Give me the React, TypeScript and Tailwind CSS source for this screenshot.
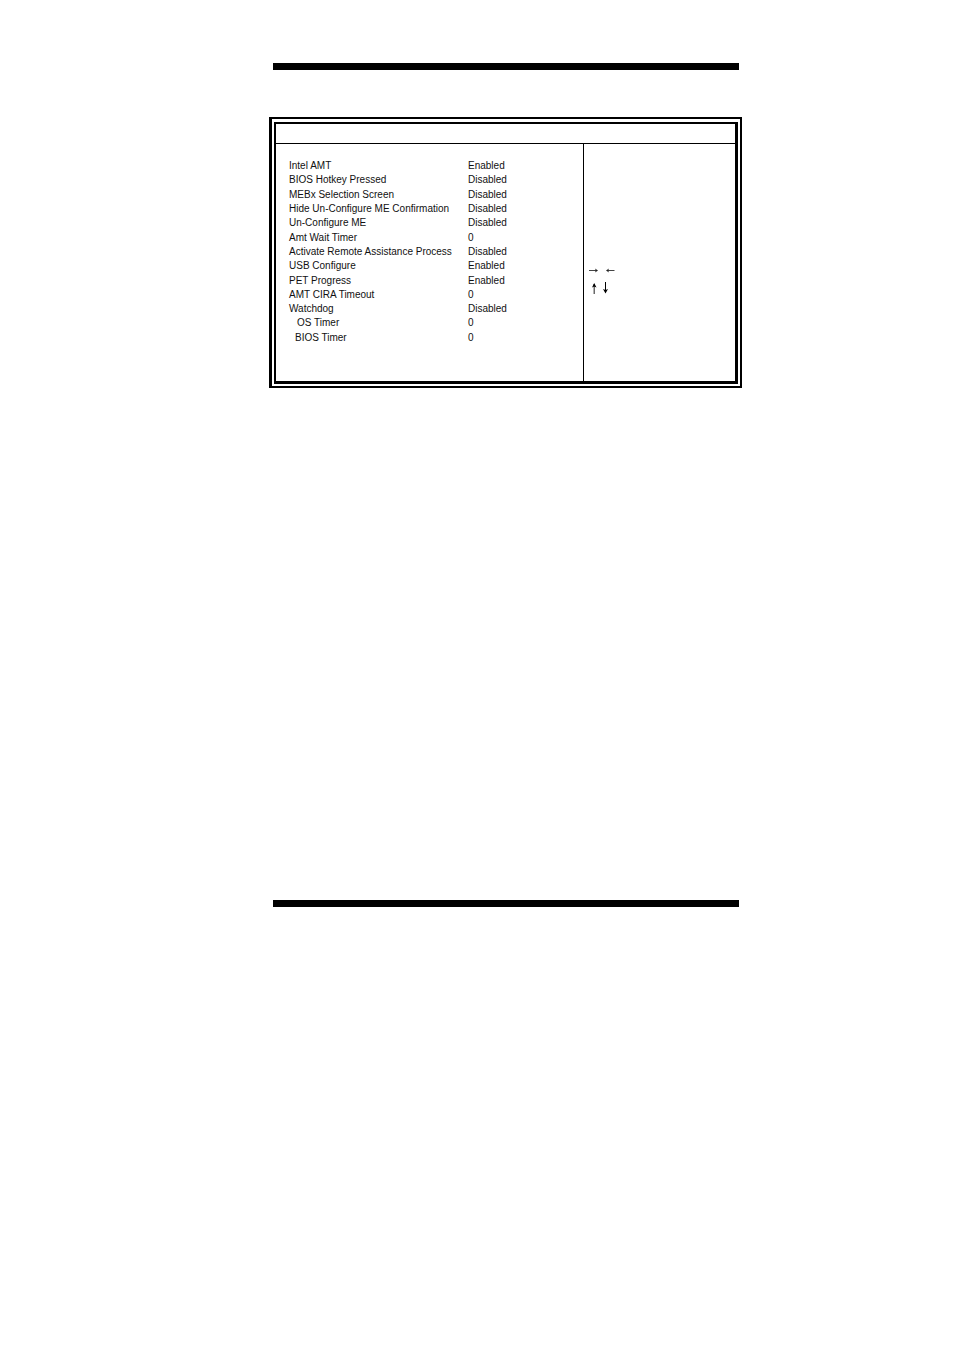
import React from 'react'

const settings = [
  { label: 'Intel AMT', value: 'Enabled' },
  { label: 'BIOS Hotkey Pressed', value: 'Disabled' },
  { label: 'MEBx Selection Screen', value: 'Disabled' },
  { label: 'Hide Un-Configure ME Confirmation', value: 'Disabled' },
  { label: 'Un-Configure ME', value: 'Disabled' },
  { label: 'Amt Wait Timer', value: '0' },
  { label: 'Activate Remote Assistance Process', value: 'Disabled' },
  { label: 'USB Configure', value: 'Enabled' },
  { label: 'PET Progress', value: 'Enabled' },
  { label: 'AMT CIRA Timeout', value: '0' },
  { label: 'Watchdog', value: 'Disabled' },
  { label: 'OS Timer', value: '0', indent: 'pl-2' },
  { label: 'BIOS Timer', value: '0', indent: 'pl-1.5' }
]

const Rule = () => <div className="ml-1 mr-[3px] h-[7px] bg-black" />

const HorizontalArrows = () => (
  <svg width="28" height="8" viewBox="0 0 28 8" role="img" aria-label="Right and left arrow keys">
    <path d="M0 4.5H8M25.5 4.5H18" stroke="#444" strokeWidth="1" />
    <path d="M9 4.5L6 2.5L6.8 4.5L6 6.5Z" fill="#222" />
    <path d="M17 4.5L20 2.5L19.2 4.5L20 6.5Z" fill="#222" />
  </svg>
)

const VerticalArrows = () => (
  <svg width="28" height="12" viewBox="0 0 28 12" role="img" aria-label="Up and down arrow keys">
    <path d="M5.2 2V12" stroke="#444" strokeWidth="1.2" />
    <path d="M5.2 1L7.5 5.5L5.2 4.5L3 5.5Z" fill="#000" />
    <path d="M16.5 0V10" stroke="#000" strokeWidth="1" />
    <path d="M16.5 11.5L14 7L16.5 8L19 7Z" fill="#000" />
  </svg>
)

const App = () => {
  return (
    <div className="min-h-screen bg-white text-black font-['Liberation_Sans',Arial,sans-serif]">
      <main className="grid grid-cols-[minmax(0,269fr)_minmax(0,473fr)_minmax(0,212fr)] pt-[63px]">
        <div className="col-start-2">
          <Rule />

          {/* Double frame around the setup screen */}
          <section className="mt-[47px] border-2 border-l-[3px] border-black px-[2px] pt-[3px] pb-[2px]">
            <div className="border-l-2 border-t-2 border-r-[3px] border-b-[3px] border-black">
              <header className="h-5 border-b border-black" />
              <div className="flex min-h-[237px]">
                {/* Settings */}
                <div className="min-w-0 flex-1 pl-[13px] pt-[15px]">
                  <table className="h-[186px] border-collapse text-[10px] leading-3 text-[#111]">
                    <tbody>
                      {settings.map((setting) => (
                        <tr key={setting.label}>
                          <th scope="row" className={`w-[179px] whitespace-nowrap p-0 text-left font-normal ${setting.indent ?? ''}`}>
                            {setting.label}
                          </th>
                          <td className="p-0">{setting.value}</td>
                        </tr>
                      ))}
                    </tbody>
                  </table>
                </div>

                {/* Key help */}
                <aside className="flex w-[152px] flex-col gap-2 border-l border-black pl-[5px] pt-[122px]">
                  <HorizontalArrows />
                  <VerticalArrows />
                </aside>
              </div>
            </div>
          </section>

          <div className="mt-[512px]">
            <Rule />
          </div>
        </div>
      </main>
    </div>
  )
}

export default App
